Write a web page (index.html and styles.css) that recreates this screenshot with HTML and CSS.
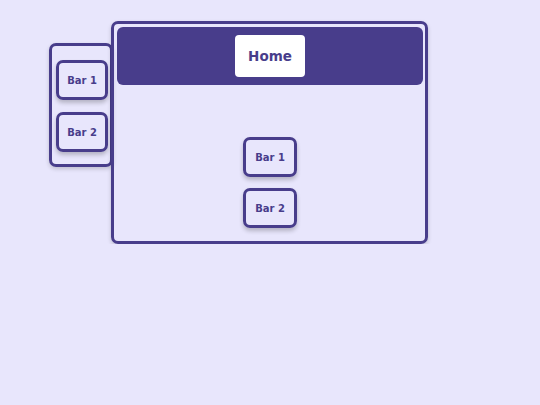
FILE: index.html
```html
<!DOCTYPE html>
<html>
<head>
<meta charset="utf-8">
<link rel="stylesheet" href="styles.css">
</head>
<body>
<div class="stage">
  <aside class="side">
    <div class="bar side-bar">Bar 1</div>
    <div class="bar side-bar">Bar 2</div>
  </aside>
  <main class="panel">
    <header class="head">
      <div class="home">Home</div>
    </header>
    <div class="content">
      <div class="bar">Bar 1</div>
      <div class="bar">Bar 2</div>
    </div>
  </main>
</div>
</body>
</html>
```
FILE: styles.css
```css
html, body {
  margin: 0;
  padding: 0;
  background: #e8e6fc;
  font-family: "DejaVu Sans", sans-serif;
  color: #483d8b;
}
.stage {
  display: flex;
  align-items: flex-start;
  padding: 21px 0 0 49px;
}
.side {
  box-sizing: border-box;
  width: 64px;
  height: 124px;
  margin-top: 22px;
  margin-right: -2px;
  border: 3px solid #483d8b;
  border-radius: 7px;
  padding: 14px 0 0 4px;
  display: flex;
  flex-direction: column;
  gap: 12px;
  box-shadow: 0 2px 4px rgba(0,0,0,0.18);
}
.panel {
  box-sizing: border-box;
  width: 317px;
  height: 223px;
  border: 3px solid #483d8b;
  border-radius: 7px;
  padding: 3px 2px 3px 3px;
  box-shadow: 0 2px 4px rgba(0,0,0,0.18);
}
.head {
  height: 58px;
  background: #483d8b;
  border-radius: 6px;
  display: flex;
  justify-content: center;
  align-items: flex-start;
  padding-top: 8px;
  box-sizing: border-box;
}
.home {
  width: 70px;
  height: 42px;
  background: #fff;
  border-radius: 4px;
  display: flex;
  align-items: center;
  justify-content: center;
  font-weight: bold;
  font-size: 13.5px;
  color: #483d8b;
}
.content {
  display: flex;
  flex-direction: column;
  align-items: center;
  gap: 11px;
  padding-top: 52px;
}
.bar {
  box-sizing: border-box;
  width: 54px;
  height: 40px;
  border: 3px solid #483d8b;
  border-radius: 7px;
  display: flex;
  align-items: center;
  justify-content: center;
  font-weight: bold;
  font-size: 10px;
  color: #483d8b;
  box-shadow: 0 3px 4px rgba(0,0,0,0.22);
}
.side-bar {
  width: 52px;
}
```
